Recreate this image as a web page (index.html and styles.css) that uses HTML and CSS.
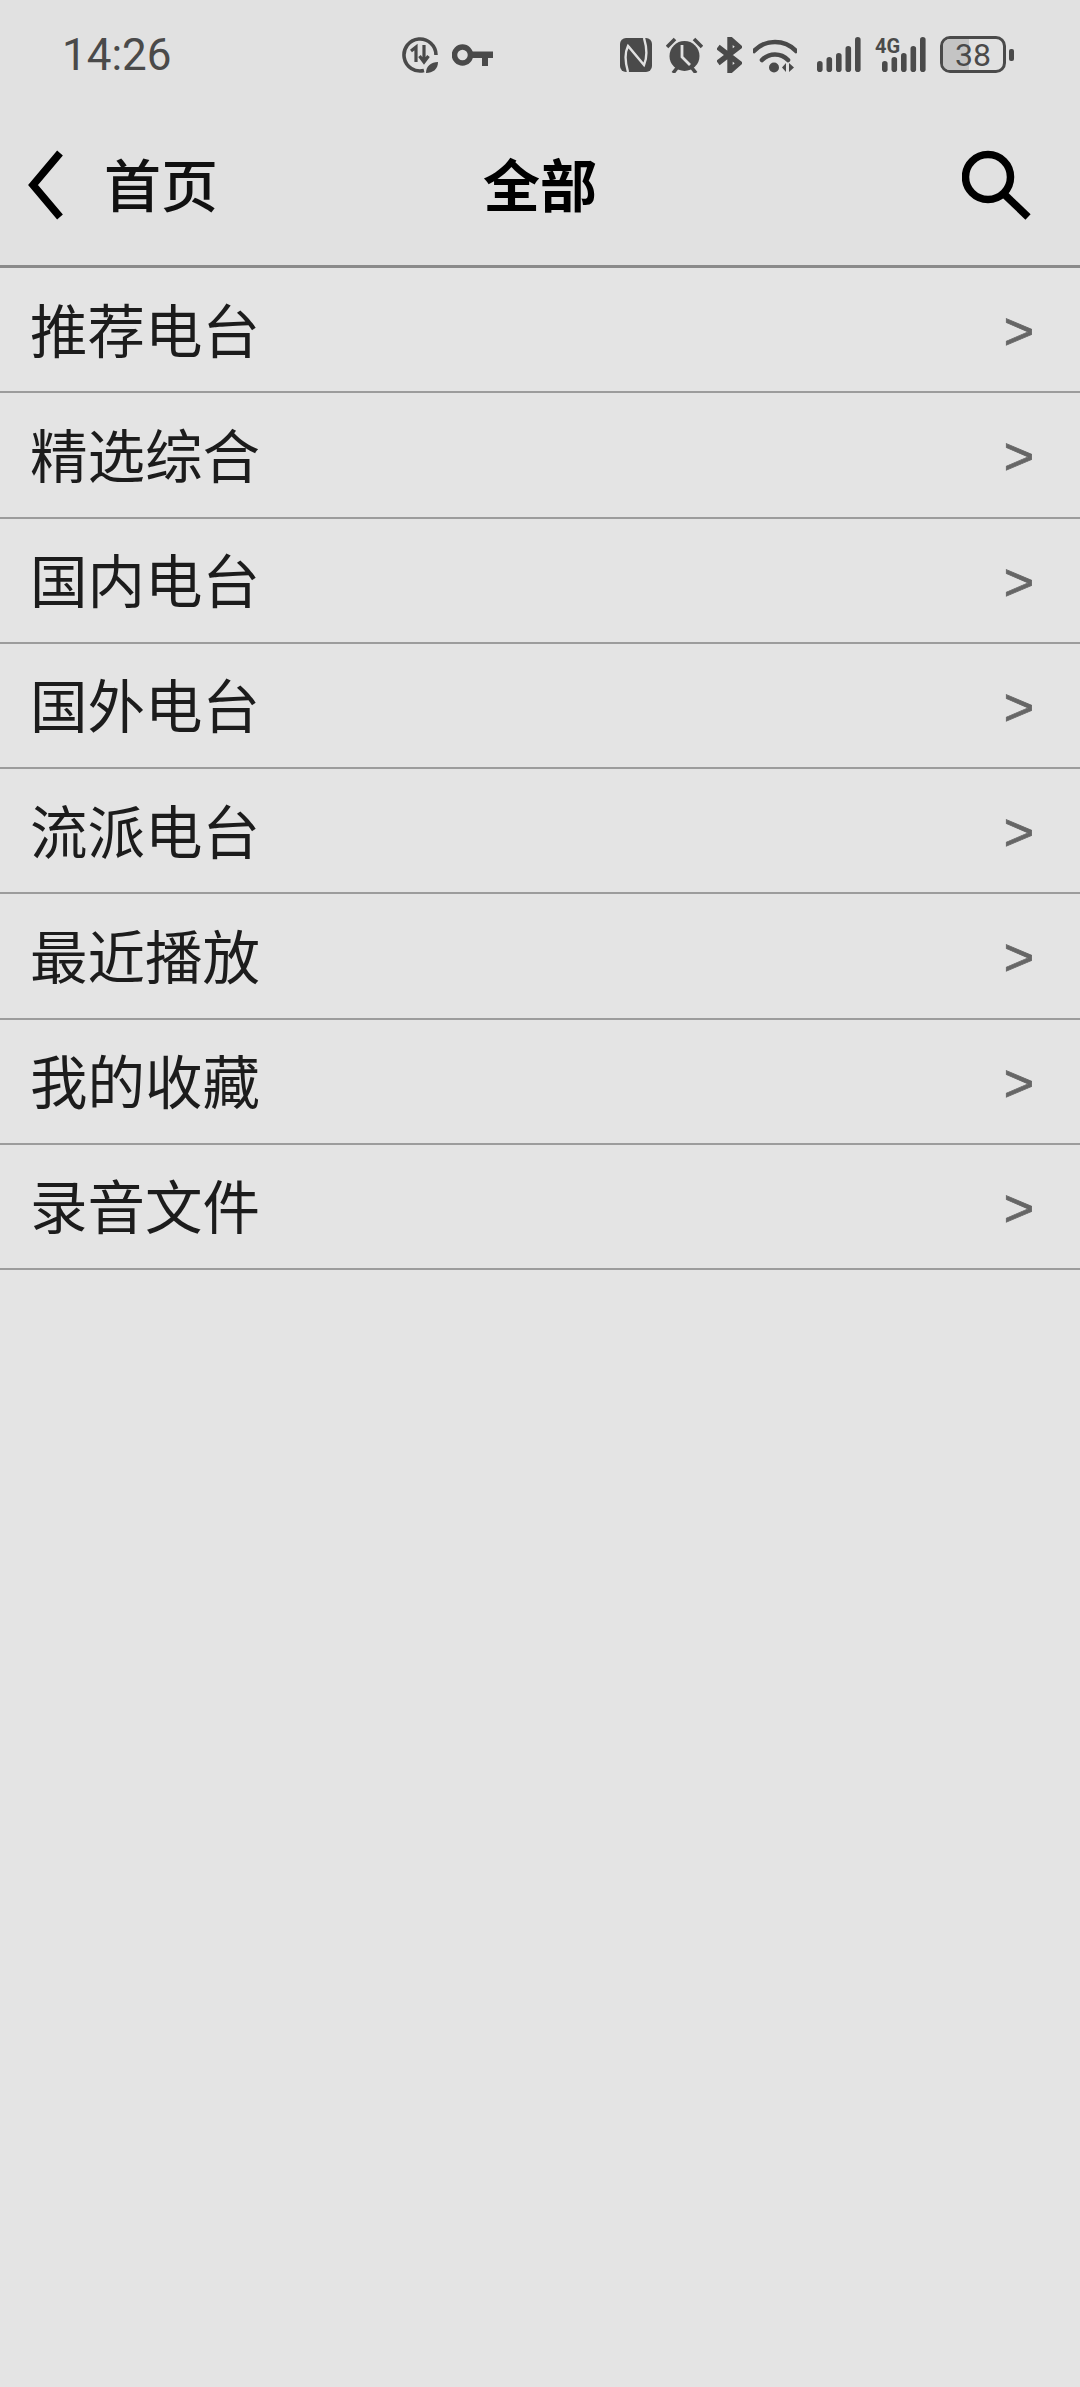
FILE: index.html
```html
<!DOCTYPE html>
<html lang="zh">
<head>
    <meta charset="UTF-8" />
    <title>全部</title>
    <link rel="stylesheet" href="styles.css">
</head>
<body>
    <div class="status-bar">
        <span class="time">14:26</span>
        <div class="status-left">
            <svg class="ic" width="36" height="36" viewBox="0 0 36 36"><path d="M22 33.500A16 16 0 1 1 34 18" fill="none" stroke="#4a4a4a" stroke-width="3.600"/><path d="M9 14l5-4v15M22 8v16M17.500 19l4.500 6 4.500-6" fill="none" stroke="#4a4a4a" stroke-width="3.200"/><path d="M24 36c0-7 5-11 12-11 0 7-5 11-12 11z" fill="#4a4a4a"/></svg>
            <svg class="ic" width="41" height="22" viewBox="0 0 41 22"><circle cx="10.500" cy="11" r="8" fill="none" stroke="#4a4a4a" stroke-width="5.500"/><path d="M18 7.500h23v6.500h-5v8h-6v-8H18z" fill="#4a4a4a"/></svg>
        </div>
        <div class="status-right">
            <svg class="ic" width="32" height="34" viewBox="0 0 32 34"><rect width="32" height="34" rx="6" fill="#4a4a4a"/><path d="M8 34C5 24 5 14 8 8l16 19C27 20 27 10 24 0M24 27L9 9" fill="none" stroke="#e1e1e1" stroke-width="2.400"/></svg>
            <svg class="ic" width="37" height="36" viewBox="0 0 37 36"><circle cx="18.500" cy="19" r="15" fill="#4a4a4a"/><path d="M1 10l8-8M36 10l-8-8M7 36l4-5M30 36l-4-5" stroke="#4a4a4a" stroke-width="3.600" fill="none"/><path d="M16 8v12l8 8" fill="none" stroke="#e1e1e1" stroke-width="2.800"/></svg>
            <svg class="ic" width="25" height="36" viewBox="0 0 25 36"><path d="M1 10l21 16-9 8V2l9 8L1 26" fill="none" stroke="#4a4a4a" stroke-width="5.400"/></svg>
            <svg class="ic wifi" width="44" height="36" viewBox="0 0 44 36"><path d="M1 14a29 29 0 0 1 42 0M9 23a18 18 0 0 1 26 0" fill="none" stroke="#4a4a4a" stroke-width="4.600" stroke-linecap="round"/><circle cx="21" cy="30.500" r="5" fill="#4a4a4a"/><path d="M33 26v9l-4-4.500zM36 26l5 4.500-5 4.500z" fill="#4a4a4a"/></svg>
            <svg class="ic bars" width="44" height="36" viewBox="0 0 44 36"><rect x="0" y="24" width="5.600" height="11" rx="2.800"/><rect x="9.500" y="20" width="5.600" height="15" rx="2.800"/><rect x="19" y="16" width="5.600" height="19" rx="2.800"/><rect x="28.500" y="9" width="5.600" height="26" rx="2.800"/><rect x="38" y="0" width="5.600" height="35" rx="2.800"/></svg>
            <div class="signal-4g">
                <span class="tag-4g">4G</span>
                <svg class="ic bars" width="44" height="36" viewBox="0 0 44 36"><rect x="0" y="24" width="5.600" height="11" rx="2.800"/><rect x="9.500" y="20" width="5.600" height="15" rx="2.800"/><rect x="19" y="16" width="5.600" height="19" rx="2.800"/><rect x="28.500" y="9" width="5.600" height="26" rx="2.800"/><rect x="38" y="0" width="5.600" height="35" rx="2.800"/></svg>
            </div>
            <div class="battery">
                <div class="battery-body">
                    <div class="battery-fill"></div>
                    <span class="battery-num">38</span>
                </div>
                <div class="battery-cap"></div>
            </div>
        </div>
    </div>

    <div class="nav-bar">
        <svg class="back" width="36" height="70" viewBox="0 0 36 70"><path d="M32 3L5 35l27 32" fill="none" stroke="#000" stroke-width="7.500"/></svg>
        <span class="nav-back-text">首页</span>
        <h1 class="nav-title">全部</h1>
        <svg class="search" width="70" height="71" viewBox="0 0 70 71"><circle cx="26" cy="27" r="22.500" fill="none" stroke="#000" stroke-width="7.500"/><path d="M42 44l24 23" fill="none" stroke="#000" stroke-width="7.500"/></svg>
    </div>

    <ul class="menu">
        <li class="menu-item"><span>推荐电台</span><span class="arrow">&gt;</span></li>
        <li class="menu-item"><span>精选综合</span><span class="arrow">&gt;</span></li>
        <li class="menu-item"><span>国内电台</span><span class="arrow">&gt;</span></li>
        <li class="menu-item"><span>国外电台</span><span class="arrow">&gt;</span></li>
        <li class="menu-item"><span>流派电台</span><span class="arrow">&gt;</span></li>
        <li class="menu-item"><span>最近播放</span><span class="arrow">&gt;</span></li>
        <li class="menu-item"><span>我的收藏</span><span class="arrow">&gt;</span></li>
        <li class="menu-item"><span>录音文件</span><span class="arrow">&gt;</span></li>
    </ul>
</body>
</html>
```

FILE: styles.css
```css
* {
    box-sizing: border-box;
    margin: 0;
    padding: 0;
}

body {
    width: 1080px;
    height: 2387px;
    overflow: hidden;
    background-color: #e4e4e4;
    font-family: "Noto Sans CJK SC", "Noto Sans", sans-serif;
}

/* Status bar */
.status-bar {
    height: 110px;
    padding: 36px 0 0 62px;
    display: flex;
    align-items: flex-start;
    background-color: #e1e1e1;
    color: #4a4a4a;
}

.time {
    width: 340px;
    font-family: "Roboto", sans-serif;
    font-size: 44px;
    line-height: 38px;
}

.ic {
    display: block;
    flex-shrink: 0;
}

.bars {
    fill: #4a4a4a;
}

.wifi {
    margin: 0 6px 0 -3px;
}

.status-left {
    display: flex;
    align-items: center;
    gap: 14px;
    width: 218px;
    margin-top: 1px;
}

.status-right {
    display: flex;
    align-items: center;
    gap: 14px;
}

.signal-4g {
    position: relative;
    width: 51px;
    height: 36px;
    display: flex;
    justify-content: flex-end;
}

.tag-4g {
    position: absolute;
    left: 0;
    top: -1px;
    font-family: "Roboto", sans-serif;
    font-size: 20px;
    font-weight: 700;
    line-height: 20px;
}

.battery {
    display: flex;
    align-items: center;
    gap: 3px;
}

.battery-body {
    position: relative;
    width: 66px;
    height: 37px;
    border: 3px solid #4a4a4a;
    border-radius: 10px;
    display: flex;
    align-items: center;
    justify-content: center;
    overflow: hidden;
}

.battery-fill {
    position: absolute;
    left: 0;
    top: 0;
    bottom: 0;
    width: 43%;
    background-color: #c4c4c4;
}

.battery-num {
    position: relative;
    font-family: "Roboto", sans-serif;
    font-size: 32px;
    line-height: 32px;
}

.battery-cap {
    width: 5px;
    height: 12px;
    border-radius: 2px;
    background-color: #4a4a4a;
}

/* Nav bar */
.nav-bar {
    position: relative;
    height: 158px;
    padding: 40px 0 0 28px;
    display: flex;
    align-items: flex-start;
    background-color: #e1e1e1;
    border-bottom: 3px solid #8a8a8a;
}

.back {
    display: block;
}

.nav-back-text {
    margin: -3px 0 0 40px;
    font-size: 57px;
    font-weight: 500;
    line-height: 70px;
    color: #111;
}

.nav-title {
    position: absolute;
    left: 0;
    right: 0;
    top: 37px;
    text-align: center;
    font-size: 57px;
    font-weight: 700;
    line-height: 70px;
    color: #000;
}

.search {
    display: block;
    margin-left: auto;
    margin-right: 48px;
}

/* List */
.menu {
    list-style: none;
}

.menu-item {
    height: 125.25px;
    padding: 0 46px 4px 30px;
    display: flex;
    align-items: center;
    justify-content: space-between;
    border-bottom: 2px solid #9c9c9c;
    font-size: 57.5px;
    color: #1c1c1c;
}

.arrow {
    margin-top: 7px;
    font-family: "Liberation Sans", sans-serif;
    font-size: 52px;
    color: #666;
    -webkit-text-stroke: 0.8px #666;
}
```
